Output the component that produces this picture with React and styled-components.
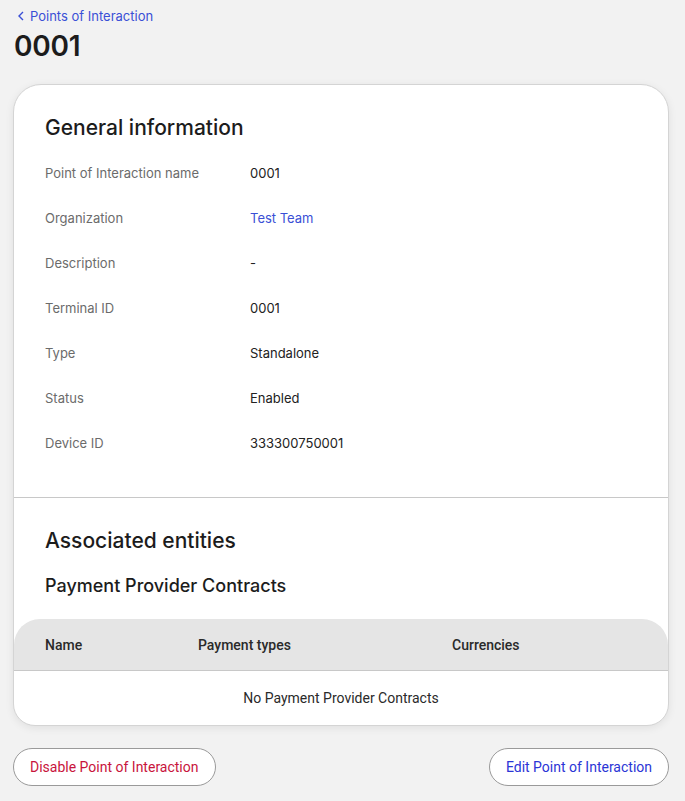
import React from "react";
import styled, { createGlobalStyle } from "styled-components";

const GlobalStyle = createGlobalStyle`
  body {
    margin: 0;
    background: #f2f2f2;
    font-family: Inter, "Noto Sans", sans-serif;
    color: #1f1f1f;
  }
`;

const rows = [
  { label: "Point of Interaction name", value: "0001" },
  { label: "Organization", value: "Test Team", link: true },
  { label: "Description", value: "-" },
  { label: "Terminal ID", value: "0001" },
  { label: "Type", value: "Standalone" },
  { label: "Status", value: "Enabled" },
  { label: "Device ID", value: "333300750001" },
];

export default function App() {
  return (
    <Page>
      <GlobalStyle />
      <BackLink href="#">
        <svg width="9" height="10" viewBox="0 0 9 10">
          <path d="M6 1 L2 5 L6 9" fill="none" stroke="#3a4fd6" strokeWidth="1.4" />
        </svg>
        Points of Interaction
      </BackLink>
      <Title>0001</Title>
      <Card>
        <Section>
          <SectionTitle>General information</SectionTitle>
          <InfoList>
            {rows.map((r) => (
              <InfoRow key={r.label}>
                <Label>{r.label}</Label>
                <Value $link={r.link}>{r.value}</Value>
              </InfoRow>
            ))}
          </InfoList>
        </Section>
        <Divider />
        <Associated>
          <SectionTitle>Associated entities</SectionTitle>
          <SubTitle>Payment Provider Contracts</SubTitle>
        </Associated>
        <Table>
          <HeadRow>
            <HeadCell>Name</HeadCell>
            <HeadCell>Payment types</HeadCell>
            <HeadCell>Currencies</HeadCell>
          </HeadRow>
          <EmptyRow>No Payment Provider Contracts</EmptyRow>
        </Table>
      </Card>
      <Actions>
        <PillButton $danger>Disable Point of Interaction</PillButton>
        <PillButton>Edit Point of Interaction</PillButton>
      </Actions>
    </Page>
  );
}

const Page = styled.div`
  padding: 7px 16px 15px 13px;
  display: flex;
  flex-direction: column;
`;

const BackLink = styled.a`
  display: flex;
  align-items: center;
  gap: 4px;
  padding-left: 4px;
  font-size: 13px;
  color: #3a4fd6;
  text-decoration: none;
  height: 18px;
`;

const Title = styled.h1`
  margin: 4px 0 0 1px;
  font-size: 28px;
  font-weight: 600;
  line-height: 34px;
  color: #1c1c1c;
  letter-spacing: -0.2px;
`;

const Card = styled.div`
  margin-top: 21px;
  background: #fff;
  border: 1px solid #d4d4d4;
  border-radius: 28px 28px 22px 22px;
  box-shadow: 0 2px 8px rgba(0, 0, 0, 0.08);
  overflow: hidden;
`;

const Section = styled.div`
  padding: 30px 31px 32px;
`;

const SectionTitle = styled.h2`
  margin: 0;
  font-size: 21px;
  font-weight: 500;
  line-height: 26px;
  color: #1c1c1c;
`;

const InfoList = styled.div`
  margin-top: 9px;
  display: flex;
  flex-direction: column;
`;

const InfoRow = styled.div`
  display: grid;
  grid-template-columns: 205px 1fr;
  height: 45px;
  align-items: center;
  font-size: 13px;
`;

const Label = styled.span`
  color: #6b6b6b;
`;

const Value = styled.span`
  color: ${(p) => (p.$link ? "#3a4fd6" : "#222")};
`;

const Divider = styled.div`
  height: 1px;
  background: #c8c8c8;
`;

const Associated = styled.div`
  padding: 30px 31px 22px;
`;

const SubTitle = styled.h3`
  margin: 21px 0 0;
  font-size: 18px;
  font-weight: 500;
  line-height: 22px;
  color: #1c1c1c;
`;

const Table = styled.div`
  display: flex;
  flex-direction: column;
`;

const HeadRow = styled.div`
  display: grid;
  grid-template-columns: 153px 254px 1fr;
  align-items: center;
  height: 51px;
  padding-left: 31px;
  background: #e5e5e5;
  border-radius: 26px 26px 0 0;
  border-bottom: 1px solid #c8c8c8;
`;

const HeadCell = styled.span`
  font-family: Roboto, "Liberation Sans", sans-serif;
  font-size: 14px;
  font-weight: 500;
  color: #2a2a2a;
`;

const EmptyRow = styled.div`
  height: 54px;
  display: flex;
  align-items: center;
  justify-content: center;
  font-family: Roboto, "Liberation Sans", sans-serif;
  font-size: 14px;
  color: #2a2a2a;
`;

const Actions = styled.div`
  margin-top: 22px;
  display: flex;
  justify-content: space-between;
`;

const PillButton = styled.button`
  height: 38px;
  padding: 0 16px;
  background: #fff;
  border: 1px solid #9a9a9a;
  border-radius: 19px;
  font-family: Roboto, "Liberation Sans", sans-serif;
  font-size: 14px;
  color: ${(p) => (p.$danger ? "#c8143c" : "#2b35d6")};
  cursor: pointer;
`;
